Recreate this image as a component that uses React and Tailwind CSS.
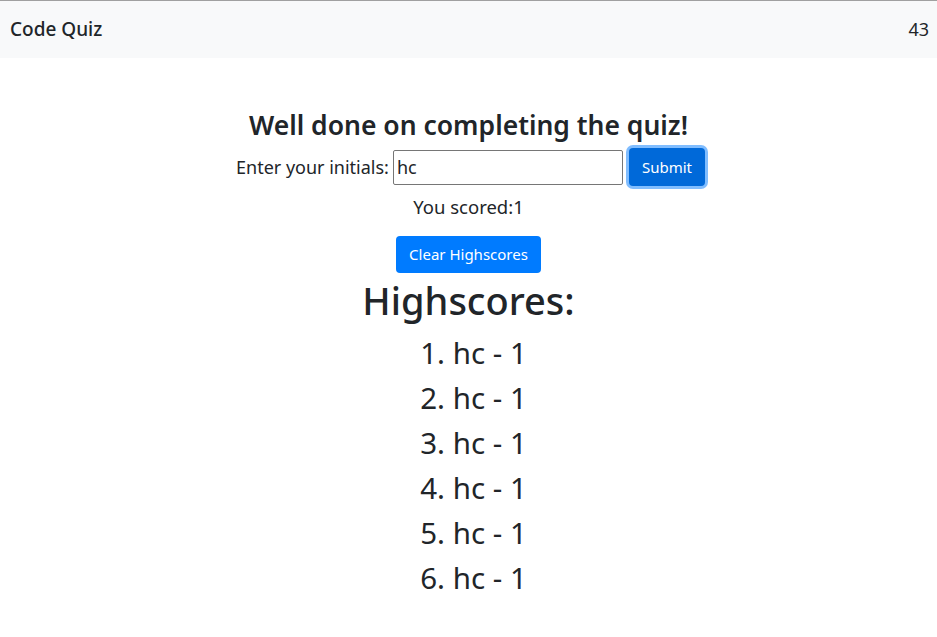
import React from 'react';

function App() {
    const scores = [1, 2, 3, 4, 5, 6];

    return (
        <div className="min-h-screen bg-white text-[#212529]" style={{ fontFamily: '"Noto Sans", "Open Sans", sans-serif' }}>
            <nav className="flex justify-between items-center h-[58px] bg-[#f8f9fa] border-t border-[#a0a0a0] px-[10px]">
                <span className="text-[19px] font-medium">Code Quiz</span>
                <span className="text-[18px] mr-[-2px]">43</span>
            </nav>

            <div className="flex flex-col items-center pt-[50px]">
                <h3 className="text-[26.5px] font-semibold leading-[34px]">Well done on completing the quiz!</h3>
                <div className="flex items-center mt-[6px] pl-[4px]">
                    <label className="text-[18px] mr-[4px]">Enter your initials:</label>
                    <input
                        defaultValue="hc"
                        className="w-[230px] h-[35px] border border-[#767676] rounded-[2px] px-[3px] text-[18px] outline-none"
                    />
                    <button className="ml-[6px] h-[38px] px-[13px] text-[15px] text-white bg-[#0069d9] rounded-[4px] ring-[3px] ring-[#80bdff]">
                        Submit
                    </button>
                </div>
                <p className="text-[18.5px] mt-[8px] leading-[26px]">You scored:1</p>

                <button className="mt-[16px] h-[37px] px-[13px] text-[15px] text-white bg-[#007bff] rounded-[4px]">
                    Clear Highscores
                </button>
                <h1 className="text-[38px] font-medium leading-[50px] mt-[2px]">Highscores:</h1>
                <ol className="list-decimal list-inside text-[29.5px] leading-[45px] mt-[5px] pl-[10px] text-center">
                    {scores.map((n) => (
                        <li key={n}>hc - 1</li>
                    ))}
                </ol>
            </div>
        </div>
    );
}

export default App;
